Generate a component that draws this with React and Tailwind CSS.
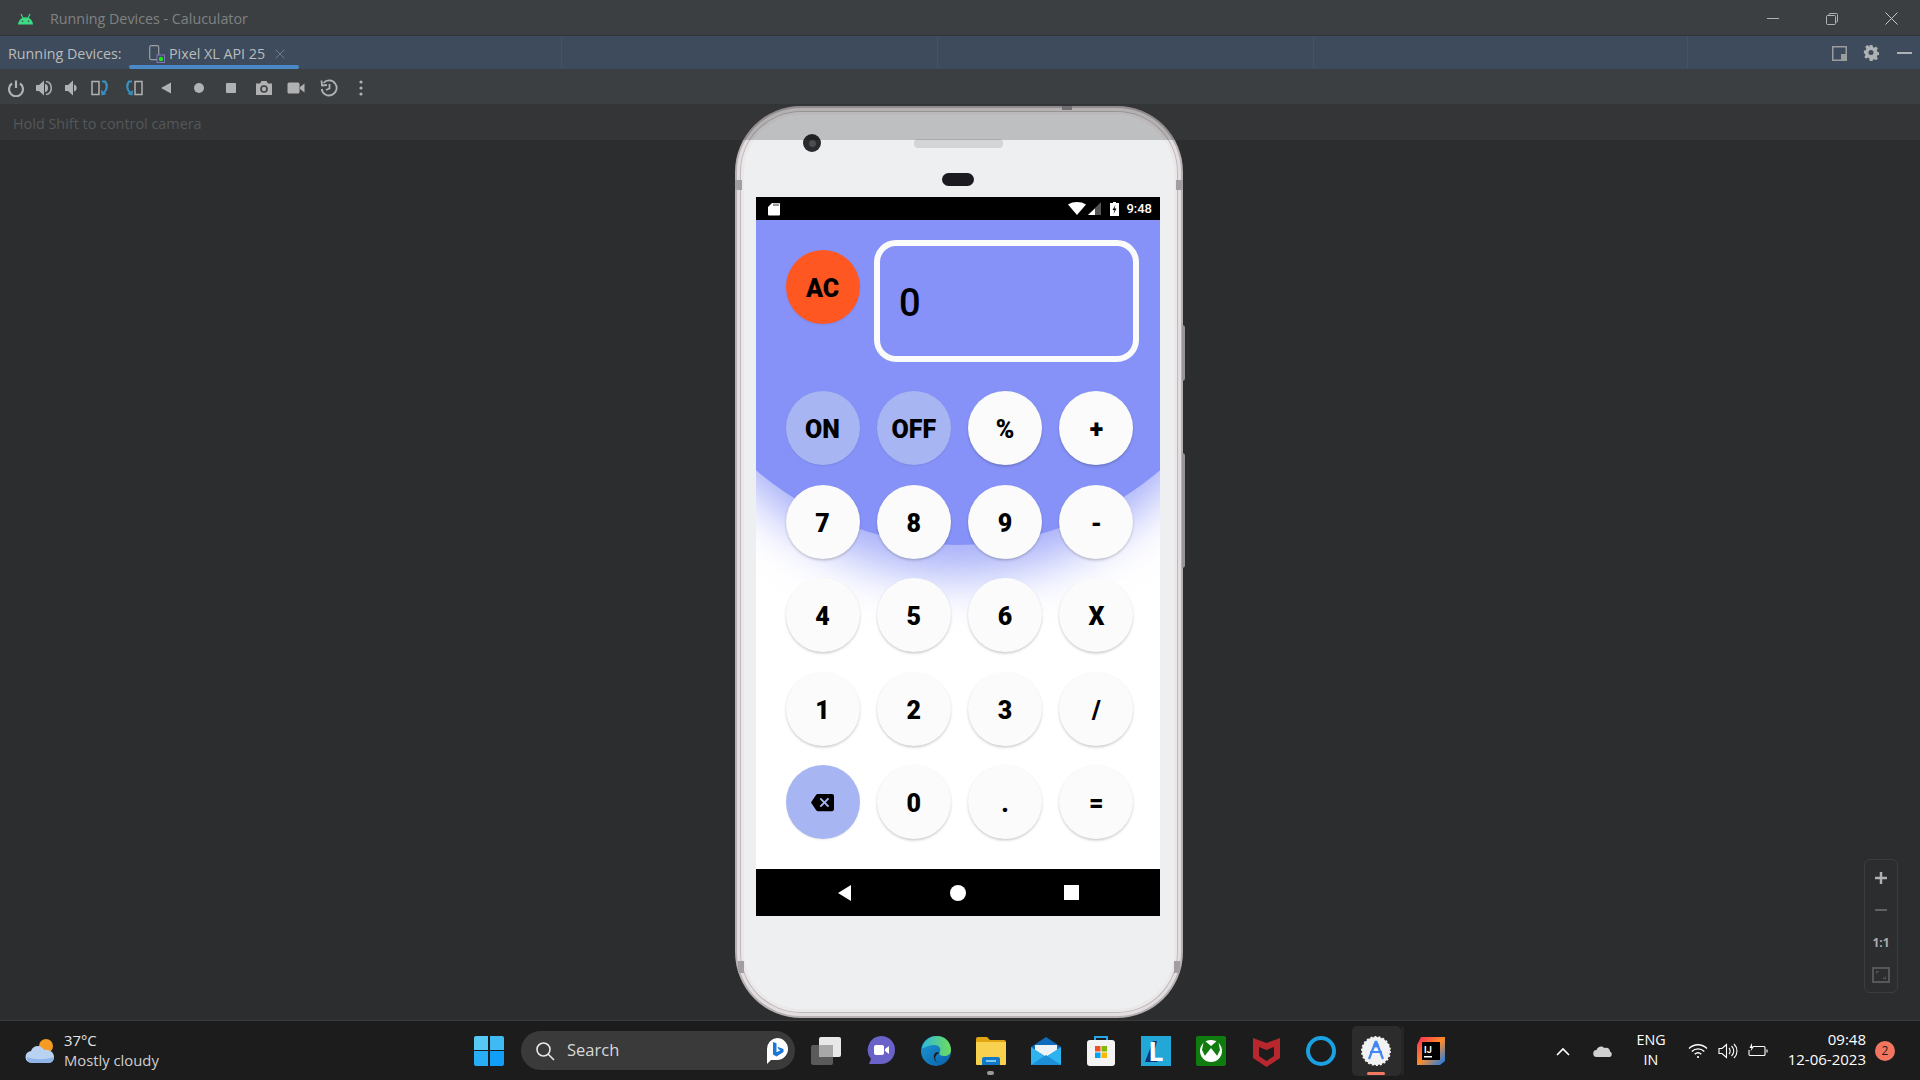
import React from "react";

const sans = { fontFamily: '"Open Sans", sans-serif' };

function AndroidHead() {
  return (
    <svg width="17" height="12" viewBox="0 0 17 12" fill="#3ddc84">
      <path d="M1 11.500C1.300 7.300 4.500 4.200 8.500 4.200s7.200 3.100 7.500 7.300z" />
      <path d="M4 1l2 4M13 1l-2 4" stroke="#3ddc84" strokeWidth="1.100" />
      <circle cx="5.500" cy="8.300" r=".8" fill="#3c3f41" />
      <circle cx="11.500" cy="8.300" r=".8" fill="#3c3f41" />
    </svg>
  );
}

// toolbar icons, all in an 18 box
const tool = "#afb1b3";
const toolbarIcons = [
  ["ml-[7px]", <g key="power" fill="none" stroke={tool} strokeWidth="2.200">
    <path d="M5 4.500a7 7 0 1 0 8 0" />
    <path d="M9 1.500v7.500" />
  </g>],
  ["ml-[10px]", <g key="volup">
    <path d="M1 6h3l5-4.500v15L4 12H1z" fill={tool} />
    <path d="M10 5c4 0 4 8 0 8" fill={tool} />
    <path d="M11 2.500c7 1 7 12 0 13" fill="none" stroke={tool} strokeWidth="1.500" />
  </g>],
  ["ml-[9px]", <g key="voldown">
    <path d="M3 6h3l5-4.500v15L6 12H3z" fill={tool} />
    <path d="M12 5.500c3.500 .5 3.500 6.500 0 7z" fill={tool} />
  </g>],
  ["ml-[11px]", <g key="rotr">
    <rect x="1" y="2.500" width="7" height="13" fill="none" stroke={tool} strokeWidth="1.500" />
    <path d="M11 2.500h3c2.500 3 2.500 8-1 11" fill="none" stroke="#3592c4" strokeWidth="2.200" />
    <path d="M10 11l.5 5.500 5-1.500z" fill="#3592c4" />
  </g>],
  ["ml-[16px]", <g key="rotl">
    <rect x="10" y="2.500" width="7" height="13" fill="none" stroke={tool} strokeWidth="1.500" />
    <path d="M7 2.500H4c-2.500 3-2.500 8 1 11" fill="none" stroke="#3592c4" strokeWidth="2.200" />
    <path d="M8 11l-.5 5.500-5-1.500z" fill="#3592c4" />
  </g>],
  ["ml-[14px]", <path key="back" d="M14 3.500v11L4 9z" fill={tool} />],
  ["ml-[15px]", <circle key="home" cx="9" cy="9" r="5" fill={tool} />],
  ["ml-[14px]", <rect key="stop" x="4" y="4" width="10" height="10" rx="1" fill={tool} />],
  ["ml-[15px]", <g key="camera">
    <path d="M1 4.500h4L6.500 2h5L13 4.500h4V16H1z" fill={tool} />
    <circle cx="9" cy="10" r="3.800" fill="#3c3f41" />
    <circle cx="9" cy="10" r="2.200" fill={tool} />
  </g>],
  ["ml-[14px]", <g key="video">
    <rect x="0.500" y="3.500" width="12" height="11" rx="1.500" fill={tool} />
    <path d="M13 8l4.500-3.500v9L13 10z" fill={tool} />
  </g>],
  ["ml-[15px]", <g key="history" fill="none" stroke={tool} strokeWidth="1.800">
    <path d="M3.500 4a7.500 7.500 0 1 1-1.800 6" />
    <path d="M1.500 1.500l.5 5 5-.5" />
    <path d="M9.500 5v4.500L6 11" />
  </g>],
  ["ml-[14px]", <g key="dots" fill={tool}>
    <circle cx="9" cy="3" r="1.600" />
    <circle cx="9" cy="9" r="1.600" />
    <circle cx="9" cy="15" r="1.600" />
  </g>],
];

function Key({ label, tone = "white" }) {
  const tones = {
    white: "bg-[#fbfbfb] shadow-[0_1.500px_2.500px_rgba(0,0,0,0.2)]",
    soft: "bg-[#a7b5f2] shadow-[0_1px_2px_rgba(0,0,0,0.08)]",
    orange: "bg-[#ff5722] shadow-[0_1px_2px_rgba(0,0,0,0.08)]",
  };
  return (
    <div
      className={`flex h-[74px] w-[74px] items-center justify-center rounded-full pt-[3px] text-[25px] font-black leading-none text-black ${tones[tone]}`}
    >
      {label}
    </div>
  );
}

function BackspaceIcon() {
  return (
    <svg className="-ml-[1px] -mt-[2px]" width="23" height="23" viewBox="0 0 24 24" fill="#000">
      <path d="M22 3H7c-.69 0-1.230.35-1.590.88L0 12l5.410 8.110c.36.53.9.89 1.590.89h15c1.100 0 2-.9 2-2V5c0-1.100-.9-2-2-2zm-3 12.590L17.590 17 14 13.410 10.410 17 9 15.590 12.590 12 9 8.410 10.410 7 14 10.590 17.590 7 19 8.410 15.410 12 19 15.590z" />
    </svg>
  );
}

const keys = [
  ["ON", "soft"], ["OFF", "soft"], ["%"], ["+"],
  ["7"], ["8"], ["9"], ["-"],
  ["4"], ["5"], ["6"], ["X"],
  ["1"], ["2"], ["3"], ["/"],
  [<BackspaceIcon key="bs" />, "soft"], ["0"], ["."], ["="],
];

function Calculator() {
  return (
    <div className="relative h-[649px] overflow-hidden bg-white" style={{ fontFamily: "Roboto, sans-serif" }}>
      <div className="absolute -left-[108px] -top-[295px] h-[620px] w-[620px] rounded-full bg-[#8692f7] shadow-[0_55px_50px_-25px_rgba(134,146,247,0.75)]" />
      <div className="relative pl-[29.500px] pt-[20px]">
        <div className="flex items-start">
          <div className="mt-[10px]">
            <Key label="AC" tone="orange" />
          </div>
          <div className="ml-[14.500px] flex h-[122px] w-[265px] items-center rounded-[22px] border-[6px] border-[#fbfbfb] pl-[19px] pt-[4px] text-[38px] font-medium text-black">
            0
          </div>
        </div>
        <div className="mt-[29px] grid w-[326px] grid-cols-[repeat(4,74px)] gap-x-[17.300px] gap-y-[19.500px]">
          {keys.map(([label, tone], i) => (
            <Key key={i} label={label} tone={tone} />
          ))}
        </div>
      </div>
    </div>
  );
}

function Phone() {
  return (
    <div className="relative -mt-[34px] h-[912px] w-[448px] rounded-[66px] bg-[#b7b0b3] p-[2px]">
      <div className="absolute -right-[2px] top-[219px] h-[56px] w-[3px] rounded-r bg-[#98949a]" />
      <div className="absolute -right-[2px] top-[347px] h-[115px] w-[3px] rounded-r bg-[#98949a]" />
      <div className="h-full rounded-[64px] bg-[#e2dee0] p-[3px]">
        <div className="h-full rounded-[61px] bg-[#bfbabc] p-[1px]">
          <div className="h-full rounded-[60px] bg-[#ebe8ea] p-[3px]">
            <div className="relative h-full rounded-[57px] bg-[#eeeff1] pl-[12px] pr-[14px] pt-[82px]">
              <div className="absolute left-[59px] top-[19px] flex h-[18px] w-[18px] items-center justify-center rounded-full bg-[#2a2b2e]">
                <div className="h-[7px] w-[7px] rounded-full bg-[#4b4d50]" />
              </div>
              <div className="absolute left-[170px] top-[24px] h-[9px] w-[89px] rounded-[4px] bg-[#d3d5d7]" />
              <div className="absolute left-[198px] top-[58px] h-[13px] w-[32px] rounded-full bg-[#1a1a20]" />
              <div className="flex h-[23px] items-center bg-black pl-[12px] pr-[8px]">
                <svg width="12" height="14" viewBox="0 0 12 14" fill="#fff">
                  <path d="M4 1h7a1 1 0 0 1 1 1v10.500a1 1 0 0 1-1 1H1a1 1 0 0 1-1-1V5z" />
                  <path d="M6 1.500v2.500M8 1.500v2.500M10 1.500v2.500" stroke="#000" strokeWidth=".8" />
                </svg>
                <div className="ml-auto flex items-center">
                  <svg width="18" height="13" viewBox="0 0 18 13" fill="#fff">
                    <path d="M0 2.500C5 -.8 13 -.8 18 2.500L9 13z" />
                  </svg>
                  <svg className="ml-[2px]" width="13" height="13" viewBox="0 0 13 13">
                    <path d="M13 0v13H0z" fill="#555" />
                    <path d="M7 6.500V13H0z" fill="#fff" />
                  </svg>
                  <svg className="ml-[9px]" width="9" height="14" viewBox="0 0 9 14">
                    <path d="M3 0h3v1h3v13H0V1h3z" fill="#fff" />
                    <path d="M5.500 3L2.500 8h2l-1 4 3-5.500h-2z" fill="#000" />
                  </svg>
                  <span className="ml-[7px] text-[13px] font-medium leading-none text-white" style={{ fontFamily: "Roboto, sans-serif" }}>
                    9:48
                  </span>
                </div>
              </div>
              <Calculator />
              <div className="flex h-[47px] items-center bg-black">
                <div className="ml-[82px] h-0 w-0 border-y-[8px] border-r-[13px] border-y-transparent border-r-white" />
                <div className="ml-[99px] h-[16px] w-[16px] rounded-full bg-white" />
                <div className="ml-[98px] h-[15px] w-[15px] bg-white" />
              </div>
            </div>
          </div>
        </div>
      </div>
      {/* antenna joints on the metal frame */}
      <div className="absolute left-0 top-[74px] h-[10px] w-[7px] bg-[#a29da0]" />
      <div className="absolute right-0 top-[74px] h-[10px] w-[7px] bg-[#a29da0]" />
      <div className="absolute left-[3px] top-[855px] h-[12px] w-[6px] bg-[#a29da0]" />
      <div className="absolute right-[3px] top-[855px] h-[12px] w-[6px] bg-[#a29da0]" />
      <div className="absolute left-[327px] top-0 h-[4px] w-[10px] bg-[#8d8a8c]" />
      {/* the hint bar dims the top of the device */}
      <div className="absolute inset-0 overflow-hidden rounded-[66px]">
        <div className="h-[34px] bg-black/20" />
      </div>
    </div>
  );
}

function ZoomPanel() {
  return (
    <div className="absolute right-[22px] top-[719px] flex h-[134px] w-[34px] flex-col items-center rounded-[6px] border border-[#3b3d3f] text-[#a9abad]">
      <svg className="mt-[11px]" width="14" height="14" viewBox="0 0 14 14" stroke="#afb1b3" strokeWidth="2.500">
        <path d="M7 1v12M1 7h12" />
      </svg>
      <div className="mt-[24px] h-[2px] w-[12px] bg-[#5f6163]" />
      <div className="mt-[26px] text-[12px] font-bold leading-none" style={sans}>1:1</div>
      <div className="mt-[18px] flex h-[16px] w-[18px] items-center justify-center border-2 border-[#55575a]">
        <svg width="10" height="8" viewBox="0 0 10 8" fill="none" stroke="#55575a" strokeWidth="1.200">
          <path d="M0 3V.6h3M10 5v2.400H7" />
        </svg>
      </div>
    </div>
  );
}

function TaskIcon({ children, active }) {
  return (
    <div className="relative flex h-[50px] w-[55px] items-center justify-center">
      {active && (
        <div className="absolute inset-y-0 left-[3px] right-[3px] rounded-[5px] bg-[#2c2c2c]">
          <div className="absolute -right-[3px] top-0 h-full w-[3px] rounded-r-[5px] bg-[#262626]" />
        </div>
      )}
      <div className="relative flex">{children}</div>
      {active && <div className="absolute bottom-[1px] h-[3px] w-[18px] rounded-full bg-[#f27a63]" />}
    </div>
  );
}

function TaskbarIcons() {
  return (
    <div className="ml-[3.500px] flex items-center">
      <TaskIcon>
        <svg width="32" height="32" viewBox="0 0 32 32">
          <rect x="1" y="10" width="22" height="20" rx="2" fill="#5a5a5a" />
          <rect x="9" y="2" width="22" height="20" rx="2" fill="#e8e8e8" />
          <rect x="9" y="10" width="14" height="12" fill="#a8a8a8" />
        </svg>
      </TaskIcon>
      <TaskIcon>
        <svg width="30" height="32" viewBox="0 0 30 32">
          <path d="M15 1a14 14 0 0 1 0 28H3l2-5A14 14 0 0 1 15 1z" fill="#6b62c9" />
          <rect x="8" y="10" width="10" height="10" rx="2" fill="#fff" />
          <path d="M19 14l4-3v8l-4-3z" fill="#fff" />
        </svg>
      </TaskIcon>
      <TaskIcon>
        <svg width="32" height="32" viewBox="0 0 32 32">
          <defs>
            <linearGradient id="edgeA" x1="0" y1="0" x2="1" y2="1">
              <stop offset="0" stopColor="#1a9bd7" />
              <stop offset="1" stopColor="#0c5fa8" />
            </linearGradient>
            <linearGradient id="edgeB" x1="0" y1="0" x2="1" y2="0">
              <stop offset="0" stopColor="#2fb9d9" />
              <stop offset="1" stopColor="#6fdc5c" />
            </linearGradient>
          </defs>
          <circle cx="16" cy="16" r="15" fill="url(#edgeA)" />
          <path d="M2 13C4 4 12 1 17 1c8 0 14 6 14 14 0 4-3 6-7 6-3 0-5-1-5-3 3-3 1-8-5-8-6 0-11 4-12 3z" fill="url(#edgeB)" />
          <path d="M20 18c-4 1-6 4-4 8 2 3 7 3 10 1-5 3-11 1-12-4-1-4 2-7 6-5z" fill="#1c1c1c" />
        </svg>
      </TaskIcon>
      <TaskIcon>
        <svg width="30" height="30" viewBox="0 0 30 30">
          <path d="M0 3a2 2 0 0 1 2-2h9l3 3h14a2 2 0 0 1 2 2v4H0z" fill="#e0a512" />
          <path d="M0 6h30v22a1 1 0 0 1-1 1H1a1 1 0 0 1-1-1z" fill="#f8d24f" />
          <path d="M6 29v-6a2 2 0 0 1 2-2h14a2 2 0 0 1 2 2v6z" fill="#1177c9" />
          <rect x="10" y="24" width="10" height="2" fill="#7cc8f5" />
        </svg>
        <div className="absolute -bottom-[9px] left-[11px] h-[4px] w-[7px] rounded-full bg-[#9a9a9a]" />
      </TaskIcon>
      <TaskIcon>
        <svg width="30" height="30" viewBox="0 0 30 30">
          <path d="M15 1L30 11v18H0V11z" fill="#0f6cbd" />
          <path d="M4 9h22v5l-11 7-11-7z" fill="#eef3f7" />
          <path d="M0 11l15 10 15-10v18H0z" fill="#2db3ee" />
          <path d="M0 29l15-10 15 10z" fill="#1c8fd8" />
        </svg>
      </TaskIcon>
      <TaskIcon>
        <svg width="30" height="32" viewBox="0 0 30 32">
          <path d="M9 6V2h12v4" fill="none" stroke="#27a5e8" strokeWidth="2" />
          <rect x="1" y="5" width="28" height="26" rx="3" fill="#f4f4f4" />
          <rect x="9" y="11" width="5.500" height="5.500" fill="#f25022" />
          <rect x="15.500" y="11" width="5.500" height="5.500" fill="#7fba00" />
          <rect x="9" y="17.500" width="5.500" height="5.500" fill="#00a4ef" />
          <rect x="15.500" y="17.500" width="5.500" height="5.500" fill="#ffb900" />
        </svg>
      </TaskIcon>
      <TaskIcon>
        <div className="relative flex h-[30px] w-[30px] items-center justify-center bg-[#22a7d6] text-[27px] font-bold leading-none text-white" style={sans}>
          <svg className="absolute left-[3px] top-[5px]" width="14" height="22" viewBox="0 0 14 22" fill="#12306f">
            <path d="M9 0h4L9 16l5 5H1z" />
          </svg>
          <span className="relative">L</span>
        </div>
      </TaskIcon>
      <TaskIcon>
        <svg width="30" height="30" viewBox="0 0 30 30">
          <rect width="30" height="30" rx="2" fill="#107c10" />
          <circle cx="15" cy="15" r="11" fill="#fff" />
          <path d="M8 4l7 6 7-6 2 10-4 8-5-8-5 8-4-8z" fill="#107c10" />
          <path d="M15 12l7 9a11 11 0 0 1-14 0z" fill="#fff" />
        </svg>
      </TaskIcon>
      <TaskIcon>
        <svg width="27" height="32" viewBox="0 0 27 32">
          <path d="M0 3l13.500 5L27 3v20l-13.500 9L0 23z" fill="#b7272d" />
          <path d="M6 12l7.500 3 7.500-3v9l-7.500 5-7.500-5z" fill="#1c1c1c" />
        </svg>
      </TaskIcon>
      <TaskIcon>
        <div className="h-[30px] w-[30px] rounded-full border-[4px] border-[#1ba1e2]" />
      </TaskIcon>
      <TaskIcon active>
        <svg width="30" height="30" viewBox="0 0 30 30">
          <circle cx="15" cy="15" r="14" fill="#f2f2f2" stroke="#f2f2f2" strokeWidth="2" strokeDasharray="2 2" />
          <path d="M15 5l-7 18M15 5l7 18M9 16h12" fill="none" stroke="#4285f4" strokeWidth="2.200" />
          <circle cx="15" cy="9" r="2.500" fill="#4285f4" />
        </svg>
      </TaskIcon>
      <TaskIcon>
        <svg width="30" height="30" viewBox="0 0 30 30">
          <defs>
            <linearGradient id="ijA" x1="0" y1="0" x2="1" y2="1">
              <stop offset="0" stopColor="#fe2857" />
              <stop offset=".5" stopColor="#fd8c2b" />
              <stop offset="1" stopColor="#087cfa" />
            </linearGradient>
          </defs>
          <path d="M5 1h24v24l-5 4H1V9z" fill="url(#ijA)" />
          <rect x="6" y="6" width="18" height="18" fill="#000" />
          <text x="8" y="17" fill="#fff" fontSize="9" fontWeight="700" fontFamily="Roboto">IJ</text>
          <rect x="8" y="20" width="8" height="1.500" fill="#fff" />
        </svg>
      </TaskIcon>
    </div>
  );
}

function Tray() {
  return (
    <div className="flex items-center text-white" style={sans}>
      <svg className="ml-[94.500px]" width="20" height="12" viewBox="0 0 20 12" fill="none" stroke="#fff" strokeWidth="1.600">
        <path d="M4 10l6-6 6 6" />
      </svg>
      <svg className="ml-[20px]" width="20" height="14" viewBox="0 0 20 14" fill="#d0d0d0">
        <path d="M4 13a3.500 3.500 0 0 1-.5-7C4.500 2.500 9 1 11.500 4c3-1 5.500 .8 5.500 3.500A3 3 0 0 1 17 13z" />
      </svg>
      <div className="ml-[18px] w-[40px] pb-[1px] text-center text-[14.300px] leading-[20px]">
        <div>ENG</div>
        <div>IN</div>
      </div>
      <svg className="ml-[17px]" width="20" height="16" viewBox="0 0 20 16" fill="none" stroke="#fff" strokeWidth="1.300">
        <path d="M1 5.500c5-5 13-5 18 0M3.800 8.500c3.500-3.500 9-3.500 12.500 0M6.700 11.300c2-2 4.600-2 6.600 0" />
        <circle cx="10" cy="14" r="1.100" fill="#fff" stroke="none" />
      </svg>
      <svg className="ml-[10px]" width="20" height="16" viewBox="0 0 20 16" fill="none" stroke="#fff" strokeWidth="1.100">
        <path d="M1 5.500h3L8.500 1.500v13L4 10.500H1z" />
        <path d="M11 5c1.500 1.500 1.500 4.500 0 6M13.500 3c3 3 3 7 0 10M16 1c4 4 4 10 0 14" />
      </svg>
      <svg className="ml-[10px]" width="20" height="16" viewBox="0 0 20 16" fill="none" stroke="#fff" strokeWidth="1.100">
        <path d="M5 3.500h11a1 1 0 0 1 1 1v7a1 1 0 0 1-1 1H2a1 1 0 0 1-1-1V7" />
        <path d="M19 6.500v3" />
        <path d="M4 0L1.500 5h2l-1 3.500L6 3.500H4z" fill="#fff" stroke="none" />
      </svg>
      <div className="ml-[8px] w-[90px] whitespace-nowrap pb-[3px] text-right text-[15px] leading-[20px]">
        <div>09:48</div>
        <div>12-06-2023</div>
      </div>
      <div className="ml-[9px] flex h-[20px] w-[20px] items-center justify-center rounded-full bg-[#f2765f] text-[12px] text-[#1c1c1c]">
        2
      </div>
    </div>
  );
}

export default function App() {
  return (
    <div className="flex h-[1080px] w-[1920px] flex-col overflow-hidden bg-[#2c2d2f]" style={sans}>
      {/* window title */}
      <div className="flex h-[36px] shrink-0 items-center border-b border-[#323537] bg-[#3c3f41] pt-[2px]">
        <div className="ml-[17px]"><AndroidHead /></div>
        <span className="ml-[16px] text-[14.300px] text-[#7f8284]">Running Devices - Caluculator</span>
        <div className="ml-auto flex items-center pr-[22px]">
          <div className="h-px w-[12px] bg-[#b0b2b4]" />
          <svg className="ml-[47px]" width="12" height="12" viewBox="0 0 12 12" fill="none" stroke="#b0b2b4">
            <rect x=".5" y="2.500" width="9" height="9" rx="1" />
            <path d="M3 2.500V1.500a1 1 0 0 1 1-1h6.500a1 1 0 0 1 1 1V8a1 1 0 0 1-1 1h-1" />
          </svg>
          <svg className="ml-[47px]" width="13" height="13" viewBox="0 0 13 13" stroke="#c6c8ca">
            <path d="M.5.500l12 12M12.500.500l-12 12" />
          </svg>
        </div>
      </div>

      {/* tool window tabs */}
      <div className="flex h-[33px] shrink-0 bg-[#3d4b5c] text-[14.300px]">
        <div className="flex w-[129px] items-center pl-[8px] pt-[3px] text-[#bbbbbb]">Running Devices:</div>
        <div className="relative flex w-[170px] items-center pl-[20px] pt-[3px] text-[#bbbbbb]">
          <svg width="16" height="18" viewBox="0 0 16 18" fill="none">
            <rect x=".7" y=".7" width="9" height="14" rx="1.500" stroke="#9da0a2" strokeWidth="1.200" />
            <rect x="8" y="10" width="7.500" height="7.500" fill="#3d4b5c" stroke="#8a6fc0" />
            <circle cx="12" cy="14" r="2.200" fill="#22e022" />
          </svg>
          <span className="ml-[4px]">Pixel XL API 25</span>
          <svg className="ml-[10px]" width="10" height="10" viewBox="0 0 10 10" stroke="#6f7a87">
            <path d="M.5.500l9 9M9.500.500l-9 9" />
          </svg>
          <div className="absolute inset-x-0 bottom-0 h-[4px] rounded-full bg-[#4a88c7]" />
        </div>
        <div className="w-[262px]" />
        <div className="w-[376px] border-l border-[#445363]" />
        <div className="w-[376px] border-l border-[#445363]" />
        <div className="w-[374px] border-l border-[#445363]" />
        <div className="flex flex-1 items-center justify-end border-l border-[#445363] pr-[8px] pt-[1px]">
          <svg width="15" height="15" viewBox="0 0 15 15">
            <rect x=".75" y=".75" width="13.500" height="13.500" fill="none" stroke="#9a9c9e" strokeWidth="1.500" />
            <rect x="9" y="8" width="5" height="6" fill="#9a9c9e" />
          </svg>
          <svg className="ml-[16px]" width="16" height="16" viewBox="0 0 16 16" fill="#afb1b3">
            <path d="M6.500 0h3l.5 2.300 1.500.7 2-1.200 2 2.200-1.200 2 .6 1.500 2.100.5v3l-2.100.5-.6 1.500 1.200 2-2 2-2-1.200-1.500.7-.5 2.300h-3L6 14.700l-1.500-.7-2 1.200-2-2 1.200-2-.6-1.500L0 9.200v-3l2.100-.5.6-1.500-1.200-2 2-2.200 2 1.200L6 2.300z" transform="scale(.9) translate(1 0)" />
            <circle cx="8" cy="7.500" r="2.500" fill="#3d4b5c" />
          </svg>
          <div className="ml-[18px] h-[2px] w-[15px] bg-[#afb1b3]" />
        </div>
      </div>

      {/* device toolbar */}
      <div className="flex h-[36px] shrink-0 items-center border-b border-[#323537] bg-[#3c3f41] pt-[2px]">
        {toolbarIcons.map(([margin, icon], i) => (
          <svg key={i} className={margin} width="18" height="18" viewBox="0 0 18 18">{icon}</svg>
        ))}
      </div>

      <div className="flex h-[35px] shrink-0 items-center bg-[#333537] pl-[13px] pt-[3px] text-[14.400px] text-[#55585a]">
        Hold Shift to control camera
      </div>

      <div className="relative flex min-h-0 flex-1 justify-center pr-[2px]">
        <Phone />
        <ZoomPanel />
      </div>

      {/* windows taskbar */}
      <div className="flex h-[60px] shrink-0 items-center border-t border-[#3a3a3a] bg-[#1c1c1c]">
        <div className="flex w-[474px] items-center pl-[25px]">
          <svg width="32" height="26" viewBox="0 0 32 26">
            <circle cx="21" cy="8" r="7" fill="#f59a23" />
            <path d="M7 25a6 6 0 0 1-1-12C8 7 16 6 19 12c5-1 10 2 10 7 0 3-2 6-6 6z" fill="#b9d2f2" />
            <path d="M2 19c8 3 18 3 27 0 0 3-2 6-6 6H7c-3 0-5-3-5-6z" fill="#8fb4e8" />
          </svg>
          <div className="ml-[7px] pb-[2px] text-[14.800px] leading-[20px] text-[#e6e6e6]">
            <div>37°C</div>
            <div className="text-[#cfcfcf]">Mostly cloudy</div>
          </div>
        </div>
        <div className="grid h-[30px] w-[30px] grid-cols-2 gap-[1.500px]">
          <div className="rounded-tl-[2px] bg-[#56c9f5]" />
          <div className="rounded-tr-[2px] bg-[#3fbaf5]" />
          <div className="rounded-bl-[2px] bg-[#27aef7]" />
          <div className="rounded-br-[2px] bg-[#119ef7]" />
        </div>
        <div className="ml-[17px] flex h-[39px] w-[274px] items-center rounded-full bg-[#3a3a3a] pl-[14px] pr-[6px]">
          <svg width="20" height="20" viewBox="0 0 20 20" fill="none" stroke="#e8e8e8" strokeWidth="1.600">
            <circle cx="8.500" cy="8.500" r="6.500" />
            <path d="M13 13l6 6" />
          </svg>
          <span className="ml-[12px] text-[16.500px] text-[#d8d8d8]">Search</span>
          <svg className="ml-auto" width="24" height="28" viewBox="0 0 24 28">
            <path d="M12 1a11 11 0 0 1 0 22H6l-4 4V12A11 11 0 0 1 12 1z" fill="#fff" />
            <path d="M8 5l3.500 1.200v9l4-2-2-1-1-2.500 6 2.300v3l-7 4.500L8 17.500z" fill="#1b78d8" />
          </svg>
        </div>
        <TaskbarIcons />
        <Tray />
      </div>
    </div>
  );
}
